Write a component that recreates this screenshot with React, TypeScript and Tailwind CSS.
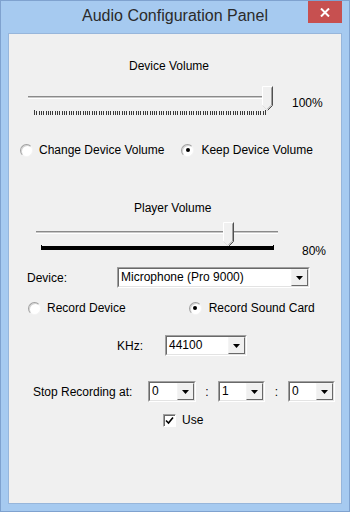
import React from "react";

const Radio = ({ checked }: { checked?: boolean }) => (
  <span className="relative flex h-[13px] w-[13px] shrink-0 items-center justify-center rounded-full border border-t-[#a0a0a0] border-l-[#a0a0a0] border-r-[#f4f4f4] border-b-[#f4f4f4] bg-white shadow-[inset_1px_1px_0_#d4d4d4]">
    {checked && <span className="h-[4px] w-[4px] rounded-full bg-black" />}
  </span>
);

const Arrow = () => (
  <svg width="7" height="4" viewBox="0 0 7 4">
    <polygon points="0,0 7,0 3.5,4" fill="#000" />
  </svg>
);

const Combo = ({ value, width }: { value: string; width: string }) => (
  <div
    className={`${width} flex h-[21px] border border-t-[#a0a0a0] border-l-[#a0a0a0] border-r-white border-b-white`}
  >
    <div className="flex flex-1 border border-t-[#696969] border-l-[#696969] border-r-[#e3e3e3] border-b-[#e3e3e3] bg-white">
      <span className="flex-1 pl-[2px] leading-[17px]">{value}</span>
      <div className="flex w-[17px] items-center justify-center border border-t-[#f4f4f4] border-l-[#f4f4f4] border-r-[#696969] border-b-[#696969] bg-[#f0f0f0]">
        <Arrow />
      </div>
    </div>
  </div>
);

const Thumb = () => (
  <svg width="11" height="25" viewBox="0 0 11 25">
    <polygon points="0.5,0.5 10.5,0.5 10.5,19.5 5.5,24.5 0.5,19.5" fill="#f0f0f0" />
    <polyline points="0.5,19.5 0.5,0.5 10.5,0.5" fill="none" stroke="#ffffff" />
    <polyline points="10.5,0.5 10.5,19.5 5.5,24.5" fill="none" stroke="#505050" />
    <polyline points="9.5,1.5 9.5,19 5.5,23" fill="none" stroke="#a0a0a0" />
    <line x1="0.5" y1="19.5" x2="5.5" y2="24.5" stroke="#e0e0e0" />
  </svg>
);

const Ticks = () => (
  <svg width="233" height="5" viewBox="0 0 233 5">
    {Array.from({ length: 101 }).map((_, i) => {
      const x = Math.round(i * 2.31) + 0.5;
      return (
        <line
          key={i}
          x1={x}
          x2={x}
          y1={i === 0 || i === 100 ? 0 : 1}
          y2={5}
          stroke="#3a3a3a"
          strokeWidth={1}
        />
      );
    })}
  </svg>
);

const Track = () => (
  <div className="h-[3px] w-[242px] border-t border-t-[#8a8a8a] border-b border-b-white bg-[#c8c8c8]" />
);

export default function App() {
  return (
    <div className="flex h-[512px] w-[350px] flex-col border border-[#7fa2cf] bg-[#a6caf0] font-['Liberation_Sans',Arial,sans-serif] text-[12px] text-black">
      {/* title bar */}
      <div className="relative h-[32px] shrink-0 pt-[6px] text-center text-[16px] leading-[18px] text-[#2b2b2b]">
        Audio Configuration Panel
        <div className="absolute right-[7px] top-0 flex h-[22px] w-[34px] items-center justify-center bg-[#c75050]">
          <svg width="10" height="9" viewBox="0 0 10 9">
            <path d="M1 0.5 L9 8.5 M9 0.5 L1 8.5" stroke="#fff" strokeWidth="2" />
          </svg>
        </div>
      </div>

      {/* client area */}
      <div className="mx-[7px] mb-[7px] flex flex-1 flex-col border border-[#97b6db] bg-[#f0f0f0] leading-[14px]">
        <div className="ml-[120px] mt-[25px] h-[14px]">Device Volume</div>

        <div className="mt-[12px] flex h-[31px]">
          <div className="relative ml-[19px] h-[31px] w-[246px]">
            <div className="absolute left-0 top-[11px]">
              <Track />
            </div>
            <div className="absolute left-[234px] top-[1px]">
              <Thumb />
            </div>
            <div className="absolute left-[6px] top-[25px]">
              <Ticks />
            </div>
          </div>
          <span className="ml-[18px] mt-[11px]">100%</span>
        </div>

        <div className="mt-[27px] flex h-[14px] items-center">
          <div className="ml-[11px] flex items-center gap-[6px]">
            <Radio />
            <span>Change Device Volume</span>
          </div>
          <div className="ml-[17px] flex items-center gap-[7px]">
            <Radio checked />
            <span>Keep Device Volume</span>
          </div>
        </div>

        <div className="ml-[125px] mt-[44px] h-[14px]">Player Volume</div>

        <div className="mt-[6px] flex h-[37px]">
          <div className="relative ml-[27px] h-[30px] w-[246px]">
            <div className="absolute left-0 top-[10px]">
              <Track />
            </div>
            <div className="absolute left-[187px] top-[1px]">
              <Thumb />
            </div>
            <div className="absolute left-[5px] top-[25px] flex h-[4px] w-[233px] items-end justify-between bg-black">
              <span className="h-[5px] w-[1px] bg-black" />
              <span className="h-[5px] w-[1px] bg-black" />
            </div>
          </div>
          <span className="ml-[20px] mt-[23px]">80%</span>
        </div>

        <div className="mt-[9px] flex h-[21px] items-center">
          <span className="ml-[18px] w-[90px]">Device:</span>
          <Combo value="Microphone (Pro 9000)" width="w-[193px]" />
        </div>

        <div className="mt-[13px] flex h-[14px] items-center">
          <div className="ml-[19px] flex items-center gap-[6px]">
            <Radio />
            <span>Record Device</span>
          </div>
          <div className="ml-[63px] flex items-center gap-[7px]">
            <Radio checked />
            <span>Record Sound Card</span>
          </div>
        </div>

        <div className="mt-[20px] flex h-[21px] items-center">
          <span className="ml-[108px] w-[48px]">KHz:</span>
          <Combo value="44100" width="w-[82px]" />
        </div>

        <div className="mt-[25px] flex h-[21px] items-center">
          <span className="ml-[24px] w-[115px]">Stop Recording at:</span>
          <Combo value="0" width="w-[48px]" />
          <span className="w-[22px] text-center">:</span>
          <Combo value="1" width="w-[47px]" />
          <span className="w-[23px] text-center">:</span>
          <Combo value="0" width="w-[47px]" />
        </div>

        <div className="mt-[11px] flex h-[14px] items-center">
          <span className="ml-[154px] flex h-[13px] w-[13px] items-center justify-center border border-t-[#a0a0a0] border-l-[#a0a0a0] border-r-white border-b-white bg-white shadow-[inset_1px_1px_0_#696969]">
            <svg width="9" height="9" viewBox="0 0 9 9">
              <path d="M1 4.5 L3.5 7 L8 1.5" fill="none" stroke="#000" strokeWidth="1.6" />
            </svg>
          </span>
          <span className="ml-[6px]">Use</span>
        </div>
      </div>
    </div>
  );
}
